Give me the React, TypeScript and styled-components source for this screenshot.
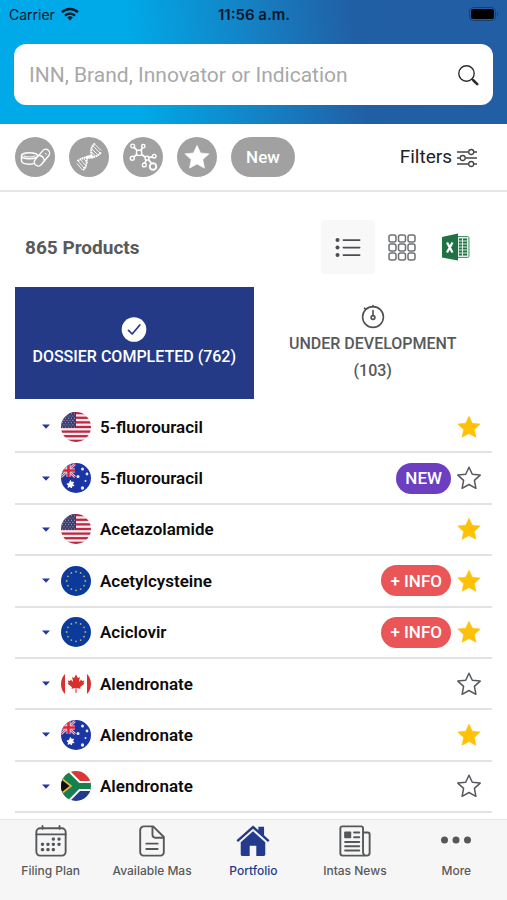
import React from "react";
import styled, { createGlobalStyle } from "styled-components";

const GlobalStyle = createGlobalStyle`
  *, *::before, *::after { box-sizing: border-box; }
  body { margin: 0; background: #fff; font-family: Roboto, "Liberation Sans", sans-serif; }
  button { font: inherit; color: inherit; border: 0; padding: 0; background: none; cursor: pointer; }
  ul { list-style: none; margin: 0; padding: 0; }
  svg { display: block; flex: none; }
`;

const Page = styled.div`
  display: flex;
  flex-direction: column;
  min-height: 100vh;
`;

const Header = styled.header`
  padding: 0 14px 19px;
  background: linear-gradient(82deg, #00a9e7 0%, #00a9e7 27%, #1482c5 50%, #215fa5 70%, #225ea3 100%);
`;

const StatusBar = styled.div`
  display: grid;
  grid-template-columns: 1fr auto 1fr;
  align-items: center;
  height: 28px;
  margin: 0 -6px 16px -5px;
  color: #06182a;
  font-family: Inter, sans-serif;
  font-size: 14px;
`;

const Carrier = styled.div`
  display: flex;
  align-items: center;
  gap: 6px;
`;

const Clock = styled.time`
  font-size: 15px;
  font-weight: 600;
`;

const Battery = styled.div`
  justify-self: end;
`;

const SearchBox = styled.form`
  display: flex;
  align-items: center;
  height: 61px;
  padding: 0 14px 0 15px;
  border-radius: 12px;
  background: #fff;
`;

const SearchInput = styled.input`
  flex: 1;
  min-width: 0;
  border: 0;
  padding: 0;
  outline: none;
  background: none;
  color: #333;
  font: 400 21px Roboto, sans-serif;
  &::placeholder { color: #a8a8a8; opacity: 1; }
`;

const Toolbar = styled.div`
  display: flex;
  align-items: center;
  justify-content: space-between;
  height: 68px;
  padding: 0 30px 1px 15px;
  border-bottom: 2px solid #e6e6e6;
`;

const Chips = styled.div`
  display: flex;
  gap: 14px;
`;

const Chip = styled.button<{ $wide?: boolean }>`
  display: flex;
  align-items: center;
  justify-content: center;
  width: ${(p) => (p.$wide ? 64 : 40)}px;
  height: 40px;
  border-radius: 20px;
  background: #a1a1a1;
  color: #fff;
  font-size: 17px;
  font-weight: 500;
`;

const FiltersButton = styled.button`
  display: flex;
  align-items: center;
  gap: 5px;
  color: #222;
  font-size: 19px;
`;

const Main = styled.main`
  flex: 1;
  display: flex;
  flex-direction: column;
  padding: 28px 15px 6px;
`;

const ListHead = styled.div`
  display: flex;
  align-items: center;
  justify-content: space-between;
  margin-bottom: 13px;
  padding: 0 9px 0 10px;
`;

const Count = styled.h1`
  margin: 0;
  color: #58595b;
  font-size: 19px;
  font-weight: 700;
`;

const Views = styled.div`
  display: flex;
`;

const ViewButton = styled.button<{ $active?: boolean }>`
  display: flex;
  align-items: center;
  justify-content: center;
  width: 54px;
  height: 54px;
  border-radius: 4px;
  background: ${(p) => (p.$active ? "#f8f8f8" : "transparent")};
`;

const Stages = styled.div`
  display: grid;
  grid-template-columns: 1fr 1fr;
  margin-bottom: 3px;
`;

const Stage = styled.button<{ $active?: boolean }>`
  display: flex;
  flex-direction: column;
  align-items: center;
  justify-content: center;
  min-height: 112px;
  padding: 1px 16px 0;
  background: ${(p) => (p.$active ? "#243a87" : "transparent")};
  color: ${(p) => (p.$active ? "#fff" : "#58595b")};
  font-size: 16px;
  font-weight: 500;
  line-height: 27px;
`;

const Products = styled.ul`
  flex: 1;
  display: grid;
  grid-auto-rows: minmax(48px, 1fr);
`;

const Product = styled.li`
  display: flex;
  align-items: center;
  gap: 9px;
  padding: 0 11px 0 25px;
  border-bottom: 2px solid #e0e2e4;
`;

const Expand = styled.button`
  display: flex;
  align-items: center;
  justify-content: center;
  width: 12px;
  height: 30px;
`;

const FlagIcon = styled.svg`
  width: 30px;
  height: 30px;
  border-radius: 50%;
`;

const ProductName = styled.span`
  flex: 1;
  color: #0c0c0c;
  font-size: 17px;
  font-weight: 600;
`;

const Actions = styled.div`
  display: flex;
  align-items: center;
  gap: 6px;
`;

const Badge = styled.span<{ $kind: "new" | "info" }>`
  display: flex;
  align-items: center;
  height: 31px;
  padding: 0 9px;
  border-radius: 16px;
  background: ${(p) => (p.$kind === "new" ? "#6b3fbf" : "#ea5558")};
  color: #fff;
  font-size: 17px;
  font-weight: 500;
`;

const TabBar = styled.nav`
  position: sticky;
  bottom: 0;
  display: grid;
  grid-template-columns: repeat(5, 1fr);
  height: 81px;
  border-top: 1px solid #e6e6e6;
  background: #f6f6f6;
`;

const TabLink = styled.a<{ $active?: boolean }>`
  display: flex;
  flex-direction: column;
  align-items: center;
  gap: 5px;
  padding-top: 4px;
  color: ${(p) => (p.$active ? "#243a8c" : "#58595b")};
  font: 500 12px/16px Inter, sans-serif;
  text-decoration: none;
  white-space: nowrap;
`;

const STAR = "M12 1.2l3.3 7 7.9.9-5.8 5.3 1.5 7.9L12 18.5l-6.9 3.8 1.5-7.9L.8 9.1l7.9-.9z";

const Star = ({ on }: { on: boolean }) => (
  <svg width="24" height="24" viewBox="0 0 24 24">
    <path d={STAR} fill={on ? "#ffc107" : "none"} stroke={on ? "#ffc107" : "#55585c"} strokeWidth={on ? 0.6 : 1.5} strokeLinejoin="round" />
  </svg>
);

const WifiIcon = () => (
  <svg width="18" height="14" viewBox="0 0 18 14" fill="none" stroke="#06182a" strokeWidth="2.4">
    <path d="M1 5.2a11.6 11.6 0 0 1 16 0" />
    <path d="M4 8.6a7.2 7.2 0 0 1 10 0" />
    <path d="M9 13.4L6.2 10.6a4 4 0 0 1 5.6 0z" fill="#06182a" stroke="none" />
  </svg>
);

const BatteryIcon = () => (
  <svg width="30" height="15" viewBox="0 0 30 15">
    <rect x="0.5" y="0.5" width="26" height="13" rx="4" fill="none" stroke="#15406f" />
    <rect x="2" y="2" width="23" height="10" rx="2.5" fill="#000" />
    <path d="M28 5v4a2.4 2.4 0 0 0 0-4z" fill="#15406f" />
  </svg>
);

const SearchIcon = () => (
  <svg width="22" height="22" viewBox="0 0 22 22" fill="none" stroke="#2b2b2b" strokeLinecap="round">
    <circle cx="9.500" cy="9.500" r="7.700" strokeWidth="1.400" />
    <path d="M15 15l1 1" strokeWidth="1.500" />
    <path d="M16.500 16.500l3.700 3.700" strokeWidth="2.600" />
  </svg>
);

const PillsIcon = () => (
  <svg width="32" height="24" viewBox="0 0 32 24" fill="none" stroke="#fff" strokeWidth="1.400" strokeLinejoin="round" strokeLinecap="round">
    <ellipse cx="10.500" cy="10.800" rx="8" ry="3" />
    <path d="M2.500 10.800v5c0 2 3.600 3.400 8 3.400 2.300 0 4.300-.4 5.800-1" />
    <path d="M5 11c2 1.400 9 1.400 11 0" strokeWidth="1" />
    <path d="M16.200 14.600l7.600-9a3.900 3.900 0 0 1 5.900 5.100l-7.600 9a3.900 3.900 0 0 1-5.900-5.100z" fill="#a1a1a1" />
    <path d="M19.800 10.300c2.500.2 4.800 2.200 5.400 5" />
    <path d="M26.200 8.300l1.200 1" strokeWidth="1" />
  </svg>
);

const DnaIcon = () => (
  <svg width="30" height="32" viewBox="0 0 30 32" fill="none" stroke="#fff">
    <path d="M21 2.500C17.500 5 16.500 8.500 17.500 14c-1 3-8 1-14.500 6.500" strokeWidth="1.900" strokeDasharray="1.900 .5" />
    <path d="M27 11.500C22 17.500 16 16 13 17.500c-.5 3 .3 8.500-4.500 12" strokeWidth="1.900" strokeDasharray="1.900 .5" />
    <path d="M12 16.500c2.500-1.200 5-1.200 7.500-.6" strokeWidth="2.600" />
    <path d="M19 5l7.500 7.500M17.500 7.500l6.500 6.500M17.500 11l4 4M21 3.500l6 6M4 20l6.500 7.500M6.500 18.500l5.500 6.500M9.500 17.500l3.500 4M3 22.500l5.500 6.500" strokeWidth=".9" />
  </svg>
);

const MoleculeIcon = () => (
  <svg width="30" height="30" viewBox="0 0 30 30" fill="none" stroke="#fff" strokeWidth="1.400">
    <path d="M9.500 9L6 5.200M12.500 9l2-3.200M9 12.500l-3.500 2.500M13.500 12.500l4 2.700M20 15.700l4.500-.8M18.300 17.500l-1.500 3.800M20.500 17.500l3 4" strokeWidth="1.800" />
    <rect x="8.500" y="8.200" width="5.200" height="5.200" rx="1.600" />
    <circle cx="19" cy="16.200" r="1.900" />
    <circle cx="4.700" cy="4" r="1.900" />
    <circle cx="15.300" cy="4.200" r="1.700" />
    <circle cx="4.300" cy="16.300" r="2" />
    <circle cx="26.200" cy="14.200" r="1.800" />
    <circle cx="16.300" cy="22.900" r="1.900" />
    <circle cx="25" cy="24.500" r="3.300" strokeWidth="1.900" />
  </svg>
);

const ChipStarIcon = () => (
  <svg width="26" height="26" viewBox="0 0 24 24" fill="#fff" stroke="#fff" strokeLinejoin="round">
    <path d={STAR} strokeWidth=".5" />
  </svg>
);

const FiltersIcon = () => (
  <svg width="20" height="22" viewBox="0 0 20 22" fill="none" stroke="#444" strokeWidth="1.300">
    <path d="M0 6h11.500M17 6h3M0 12h3M8.500 12H20M0 18h11.500M17 18h3" />
    <circle cx="14.200" cy="6" r="2.500" />
    <circle cx="5.700" cy="12" r="2.500" />
    <circle cx="14.200" cy="18" r="2.500" />
  </svg>
);

const ListIcon = () => (
  <svg width="26" height="22" viewBox="0 0 26 22" fill="#4b4d50">
    {[4, 11.500, 19].map((y) => (
      <g key={y}>
        <circle cx="2.500" cy={y} r="2" />
        <rect x="7.500" y={y - 0.800} width="18" height="1.700" rx=".8" />
      </g>
    ))}
  </svg>
);

const GridIcon = () => (
  <svg width="28" height="28" viewBox="0 0 28 28" fill="none" stroke="#6f7174" strokeWidth="1.500">
    {[2, 11, 20].map((y) => [1, 10.500, 20].map((x) => (
      <rect key={`${x}-${y}`} x={x} y={y} width="7" height="7" rx="2" />
    )))}
  </svg>
);

const ExcelIcon = () => (
  <svg width="30" height="28" viewBox="0 0 30 28">
    <path d="M16 3.500h10.500c.8 0 1.500.6 1.500 1.400v18.200c0 .8-.7 1.400-1.500 1.400H16z" fill="#dcece3" stroke="#4f9470" />
    <path d="M18 6.500h3M22 6.500h4M18 9.500h3M22 9.500h4M18 12.500h3M22 12.500h4M18 15.500h3M22 15.500h4M18 18.500h3M22 18.500h4M18 21.500h3M22 21.500h4" stroke="#207245" strokeWidth="1.800" />
    <path d="M1 4L17 .5v27L1 24.500z" fill="#207245" />
    <path d="M6 9.500l5.500 10M11.500 9.500L6 19.500" stroke="#fff" strokeWidth="2.300" />
  </svg>
);

const CheckIcon = () => (
  <svg width="26" height="26" viewBox="0 0 26 26" fill="none">
    <circle cx="13" cy="12.500" r="12.300" fill="#fff" />
    <path d="M7.500 13.300l3.700 3.700 7.600-9" stroke="#243a87" strokeWidth="1.700" strokeLinecap="round" strokeLinejoin="round" />
  </svg>
);

const StopwatchIcon = () => (
  <svg width="26" height="26" viewBox="0 0 26 26" fill="none" stroke="#4f5153" strokeWidth="1.600" strokeLinecap="round">
    <circle cx="13" cy="13" r="10.400" />
    <circle cx="13" cy="13.500" r="1.900" />
    <path d="M13 11.500V6.500M13 2.600V1.500M5.600 5.200L4.500 4.200" />
  </svg>
);

const CaretIcon = () => (
  <svg width="8" height="5" viewBox="0 0 8 5">
    <path d="M0 .5h8L4 4.700z" fill="#243a9a" />
  </svg>
);

const UsFlag = () => (
  <FlagIcon viewBox="0 0 30 30" role="img" aria-label="United States">
    <rect width="30" height="30" fill="#f4f0f2" />
    {[0, 1, 2, 3, 4, 5, 6].map((i) => (
      <rect key={i} y={i * 4.615} width="30" height="2.300" fill="#bf2742" />
    ))}
    <rect width="15" height="16" fill="#3c3b6e" />
    {[0, 1, 2, 3, 4, 5, 6].map((r) => [0, 1, 2, 3, 4].map((c) => (
      <circle key={`${r}-${c}`} cx={1.500 + c * 3 - (r % 2) * 1.500} cy={1.800 + r * 2.200} r=".6" fill="#a9a8c5" />
    )))}
  </FlagIcon>
);

const AuFlag = () => (
  <FlagIcon viewBox="0 0 30 30" role="img" aria-label="Australia">
    <rect width="30" height="30" fill="#1c35a5" />
    <path d="M0 1L14 14M14 1L0 14" stroke="#e5c9da" strokeWidth="2.400" />
    <path d="M0 1L14 14M14 1L0 14" stroke="#d9344c" strokeWidth="1" />
    <path d="M7.500 0v14M0 7.500h14" stroke="#f6dbe2" strokeWidth="4" />
    <path d="M7.500 0v14M0 7.500h14" stroke="#e0243c" strokeWidth="2.600" />
    <path d="M9.500 17.500l.9 2 2.200-.4-1.100 1.900 1.500 1.600-2.200.2-.3 2.200-1.500-1.600-2 .9.700-2.100-1.800-1.200 2.200-.3z" fill="#fff" stroke="#fff" />
    <g fill="#e8ecff">
      <circle cx="21.500" cy="6" r="1.500" />
      <circle cx="17" cy="13.500" r="1.500" />
      <circle cx="26" cy="11" r="1.400" />
      <circle cx="24.500" cy="18" r="1" />
      <circle cx="21.500" cy="25" r="1.700" />
    </g>
  </FlagIcon>
);

const EuFlag = () => (
  <FlagIcon viewBox="0 0 30 30" role="img" aria-label="European Union">
    <rect width="30" height="30" fill="#0b3a9b" />
    {Array.from({ length: 12 }, (_, i) => (
      <circle key={i} cx={15 + 9.300 * Math.sin((i * Math.PI) / 6)} cy={15 - 9.300 * Math.cos((i * Math.PI) / 6)} r=".9" fill="#b9b26b" />
    ))}
  </FlagIcon>
);

const CaFlag = () => (
  <FlagIcon viewBox="0 0 30 30" role="img" aria-label="Canada">
    <rect width="30" height="30" fill="#fff" />
    <path d="M0 0h4v30H0zM26 0h4v30h-4z" fill="#d9302c" />
    <path d="M15 5.600l1.900 3.400 2-1-1 5 2.500-2.400.6 1.300 2.300-.4-.8 2.400 1 .7-4.500 3.600.5 1.500-4-.6.100 4.700h-1.200l.1-4.700-4 .6.500-1.500-4.500-3.600 1-.7-.8-2.400 2.300.4.600-1.300 2.500 2.400-1-5 2 1z" fill="#d9302c" />
  </FlagIcon>
);

const ZaFlag = () => (
  <FlagIcon viewBox="0 0 30 30" role="img" aria-label="South Africa">
    <path d="M0 0h30v15H0z" fill="#d93a35" />
    <path d="M0 15h30v15H0z" fill="#223b8f" />
    <path d="M0 -2L17 15L0 32M15 15h15" fill="none" stroke="#fff" strokeWidth="10" />
    <path d="M0 -2L17 15L0 32z" fill="#16804f" />
    <path d="M0 -2L17 15L0 32M15 15h15" fill="none" stroke="#16804f" strokeWidth="6" />
    <path d="M-2 5.500L10 15L-2 24.500z" fill="#111" stroke="#eeb541" strokeWidth="1.700" />
  </FlagIcon>
);

const CalendarIcon = () => (
  <svg width="34" height="34" viewBox="-1 -1 36 36" fill="none" stroke="#55585a" strokeWidth="2" strokeLinecap="round">
    <rect x="1.500" y="3.500" width="31" height="29" rx="4" />
    <path d="M1.500 10h31M8 1v3M26 1v3" />
    <g fill="#55585a" stroke="none">
      {[[19.500, 15], [25.500, 15], [8, 20.500], [13.800, 20.500], [19.500, 20.500], [25.500, 20.500], [8, 26.200], [13.800, 26.200], [19.500, 26.200]].map(([x, y]) => (
        <rect key={`${x}-${y}`} x={x - 1.700} y={y - 1.700} width="3.400" height="3.400" rx="1.200" />
      ))}
    </g>
  </svg>
);

const DocumentIcon = () => (
  <svg width="34" height="34" viewBox="-1 -1 36 36" fill="none" stroke="#55585a" strokeWidth="2" strokeLinecap="round" strokeLinejoin="round">
    <path d="M8.500 1.500h9.700L29.500 12.800V29a3.500 3.500 0 0 1-3.500 3.500H8A3.500 3.500 0 0 1 4.500 29V5.500a4 4 0 0 1 4-4z" />
    <path d="M17.500 2v8.500a3 3 0 0 0 3 3H29M11 19.800h12M11 25.500h12" />
  </svg>
);

const HomeIcon = () => (
  <svg width="36" height="34" viewBox="-1 -1 38 36" fill="#243a8c">
    <path d="M18 .5L.5 16.200l1.700 1.800L18 4 33.800 18l1.700-1.800-5.800-5.200V2h-6v3.600z" />
    <path d="M18 6.800L5 18.200V31c0 1.200.8 2 2 2h7.500V22h7v11H29c1.200 0 2-.8 2-2V18.200z" />
  </svg>
);

const NewsIcon = () => (
  <svg width="34" height="34" viewBox="-1 -1 36 36" fill="none" stroke="#55585a" strokeWidth="2" strokeLinecap="round" strokeLinejoin="round">
    <path d="M25.500 29V3.500a2 2 0 0 0-2-2h-20a2 2 0 0 0-2 2V30a2.500 2.500 0 0 0 2.500 2.500h25.500a3 3 0 0 0 3-3V10a2 2 0 0 0-2-2h-5M25.500 29a3.500 3.500 0 0 0 3.500 3.500" />
    <path d="M16 8h5.500M16 13h5.500M6.500 18H21.500M6.500 22.500H21.500M6.500 27H21.500" />
    <rect x="5.500" y="7" width="7.500" height="7" rx="1" fill="#55585a" stroke="none" />
  </svg>
);

const MoreIcon = () => (
  <svg width="34" height="34" viewBox="0 0 34 34" fill="#55585a">
    <circle cx="5.500" cy="16" r="3.500" />
    <circle cx="17" cy="16" r="3.500" />
    <circle cx="28.500" cy="16" r="3.500" />
  </svg>
);

type ProductData = { name: string; Flag: React.FC; starred: boolean; badge?: "new" | "info" };

const products: ProductData[] = [
  { name: "5-fluorouracil", Flag: UsFlag, starred: true },
  { name: "5-fluorouracil", Flag: AuFlag, starred: false, badge: "new" },
  { name: "Acetazolamide", Flag: UsFlag, starred: true },
  { name: "Acetylcysteine", Flag: EuFlag, starred: true, badge: "info" },
  { name: "Aciclovir", Flag: EuFlag, starred: true, badge: "info" },
  { name: "Alendronate", Flag: CaFlag, starred: false },
  { name: "Alendronate", Flag: AuFlag, starred: true },
  { name: "Alendronate", Flag: ZaFlag, starred: false },
];

const tabs = [
  { label: "Filing Plan", Icon: CalendarIcon },
  { label: "Available Mas", Icon: DocumentIcon },
  { label: "Portfolio", Icon: HomeIcon, active: true },
  { label: "Intas News", Icon: NewsIcon },
  { label: "More", Icon: MoreIcon },
];

export default function App() {
  return (
    <Page>
      <GlobalStyle />
      <Header>
        <StatusBar>
          <Carrier>Carrier <WifiIcon /></Carrier>
          <Clock>11:56 a.m.</Clock>
          <Battery><BatteryIcon /></Battery>
        </StatusBar>
        <SearchBox role="search" onSubmit={(e) => e.preventDefault()}>
          <SearchInput aria-label="Search products" placeholder="INN, Brand, Innovator or Indication" />
          <button type="submit" aria-label="Search"><SearchIcon /></button>
        </SearchBox>
      </Header>
      <Toolbar>
        <Chips>
          <Chip aria-label="Tablets"><PillsIcon /></Chip>
          <Chip aria-label="Biologics"><DnaIcon /></Chip>
          <Chip aria-label="Molecules"><MoleculeIcon /></Chip>
          <Chip aria-label="Favourites"><ChipStarIcon /></Chip>
          <Chip $wide>New</Chip>
        </Chips>
        <FiltersButton>Filters <FiltersIcon /></FiltersButton>
      </Toolbar>
      <Main>
        <ListHead>
          <Count>865 Products</Count>
          <Views>
            <ViewButton $active aria-label="List view"><ListIcon /></ViewButton>
            <ViewButton aria-label="Grid view"><GridIcon /></ViewButton>
            <ViewButton aria-label="Export to Excel"><ExcelIcon /></ViewButton>
          </Views>
        </ListHead>
        <Stages>
          <Stage $active><CheckIcon />DOSSIER COMPLETED (762)</Stage>
          <Stage><StopwatchIcon />UNDER DEVELOPMENT (103)</Stage>
        </Stages>
        <Products>
          {products.map(({ name, Flag, starred, badge }, i) => (
            <Product key={i}>
              <Expand aria-label={`Expand ${name}`}><CaretIcon /></Expand>
              <Flag />
              <ProductName>{name}</ProductName>
              <Actions>
                {badge && <Badge $kind={badge}>{badge === "new" ? "NEW" : "+ INFO"}</Badge>}
                <button aria-label={`Favourite ${name}`} aria-pressed={starred}><Star on={starred} /></button>
              </Actions>
            </Product>
          ))}
        </Products>
      </Main>
      <TabBar>
        {tabs.map(({ label, Icon, active }) => (
          <TabLink key={label} href="#" $active={active}><Icon />{label}</TabLink>
        ))}
      </TabBar>
    </Page>
  );
}
